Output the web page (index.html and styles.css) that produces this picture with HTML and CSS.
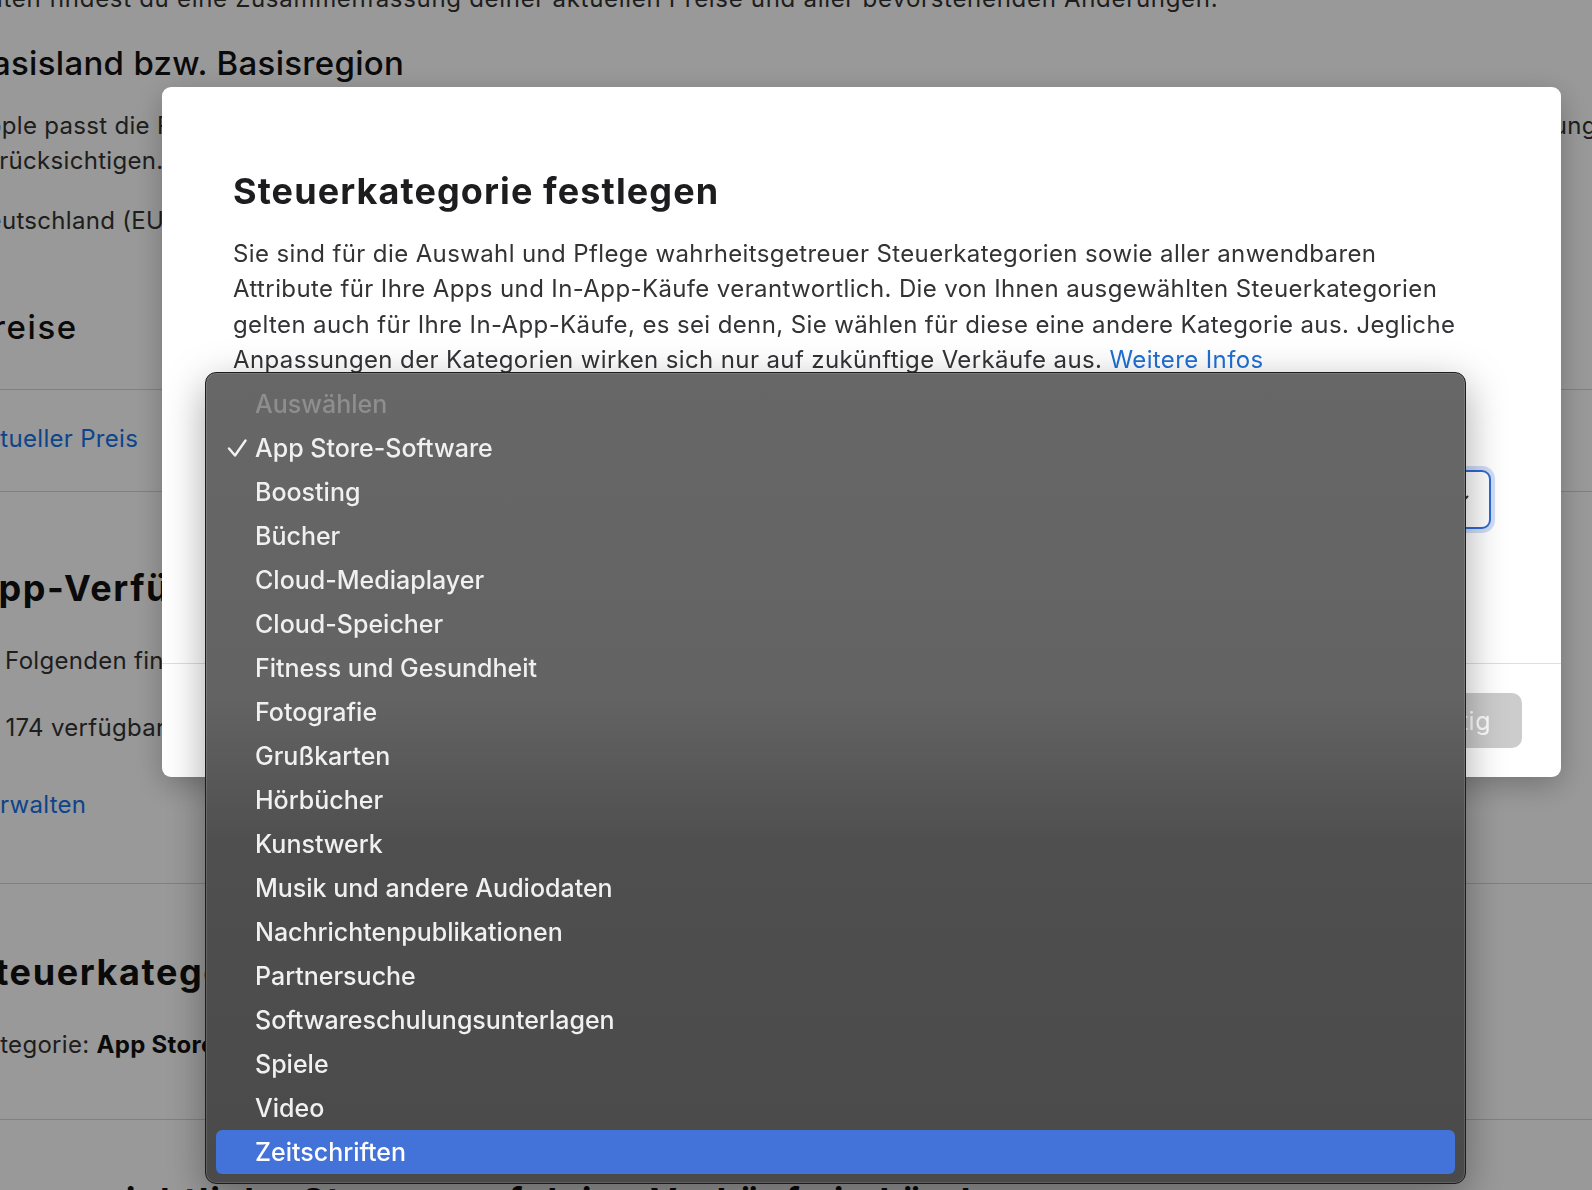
FILE: index.html
```html
<!DOCTYPE html>
<html lang="de">
  <head>
    <meta charset="UTF-8" />
    <meta name="viewport" content="width=device-width, initial-scale=1.0" />
    <title>Preise und Verfügbarkeit</title>
    <link rel="stylesheet" href="styles.css">
  </head>
  <body>
    <!-- Page behind the dialog -->
    <div class="page">
      <p class="intro">Unten findest du eine Zusammenfassung deiner aktuellen Preise und aller bevorstehenden Änderungen.</p>

      <h2 class="sub-title">Basisland bzw. Basisregion</h2>
      <p class="text region-text">Apple passt die Preise in anderen Ländern oder Regionen automatisch an, um Steuern und Wechselkursänderungen der jeweiligen Währung zu<br>berücksichtigen.</p>
      <p class="text region-value">Deutschland (EUR)</p>

      <h2 class="sub-title prices-title">Preise</h2>
      <div class="row-list">
        <div class="row"><a href="#">Aktueller Preis</a></div>
      </div>

      <h2 class="section-title availability-title">App-Verfügbarkeit</h2>
      <p class="text follow-text">Im Folgenden findest du die Länder und Regionen, in denen deine App verfügbar ist.</p>
      <p class="text count-text">In: 174 verfügbaren Ländern oder Regionen</p>
      <p class="text manage-link"><a href="#">Verwalten</a></p>

      <div class="divider"></div>

      <h2 class="section-title tax-title">Steuerkategorie</h2>
      <p class="text tax-text">Kategorie: <strong>App Store-Software</strong></p>

      <div class="divider last"></div>

      <h2 class="section-title bottom-title">Voraussichtliche Steuern auf deine Verkäufe in Ländern</h2>
    </div>

    <!-- Dialog -->
    <div class="overlay"></div>
    <div class="modal">
      <div class="modal-body">
        <h1 class="modal-title">Steuerkategorie festlegen</h1>
        <p class="modal-text">Sie sind für die Auswahl und Pflege wahrheitsgetreuer Steuerkategorien sowie aller anwendbaren Attribute für Ihre Apps und In-App-Käufe verantwortlich. Die von Ihnen ausgewählten Steuerkategorien gelten auch für Ihre In-App-Käufe, es sei denn, Sie wählen für diese eine andere Kategorie aus. Jegliche Anpassungen der Kategorien wirken sich nur auf zukünftige Verkäufe aus. <a href="#">Weitere Infos</a></p>

        <div class="field">
          <label class="field-label">Steuerkategorie</label>
          <div class="select">
            <span>App Store-Software</span>
            <svg class="chevron" width="14" height="9" viewBox="0 0 14 9">
              <path d="M1.5 1.5 L7 7 L12.5 1.5" fill="none" stroke="#333" stroke-width="2" stroke-linecap="round" stroke-linejoin="round"/>
            </svg>
          </div>
        </div>
      </div>
      <div class="modal-footer">
        <button class="btn-cancel">Abbrechen</button>
        <button class="btn-done" disabled>Fertig</button>
      </div>
    </div>

    <!-- Open select menu -->
    <ul class="menu">
      <li class="menu-item disabled">Auswählen</li>
      <li class="menu-item checked">
        <svg class="check" width="20" height="20" viewBox="0 0 20 20">
          <path d="M2 10.5 L8 17.5 L18.5 2.5" fill="none" stroke="#f2f2f2" stroke-width="2.4" stroke-linecap="round" stroke-linejoin="round"/>
        </svg>
        App Store-Software
      </li>
      <li class="menu-item">Boosting</li>
      <li class="menu-item">Bücher</li>
      <li class="menu-item">Cloud-Mediaplayer</li>
      <li class="menu-item">Cloud-Speicher</li>
      <li class="menu-item">Fitness und Gesundheit</li>
      <li class="menu-item">Fotografie</li>
      <li class="menu-item">Grußkarten</li>
      <li class="menu-item">Hörbücher</li>
      <li class="menu-item">Kunstwerk</li>
      <li class="menu-item">Musik und andere Audiodaten</li>
      <li class="menu-item">Nachrichtenpublikationen</li>
      <li class="menu-item">Partnersuche</li>
      <li class="menu-item">Softwareschulungsunterlagen</li>
      <li class="menu-item">Spiele</li>
      <li class="menu-item">Video</li>
      <li class="menu-item active">Zeitschriften</li>
    </ul>
  </body>
</html>
```

FILE: styles.css
```css
/* General Styles */
html,
body {
  margin: 0;
  padding: 0;
  height: 100%;
  overflow: hidden;
}

body {
  font-family: "Inter", "Noto Sans", sans-serif;
  background-color: #fff;
  color: #333;
}

a {
  color: #1672e6;
  text-decoration: none;
}

/* Page behind the dialog */
.page {
  width: 1700px;
  margin: -19px 0 0 -30px;
}

.page p {
  margin: 0;
}

.text,
.intro {
  font-size: 24px;
  line-height: 35px;
  letter-spacing: 0.3px;
  color: #333;
}

.intro {
  letter-spacing: 0.7px;
}

.region-text {
  white-space: nowrap;
}

.sub-title {
  font-size: 33px;
  line-height: 40px;
  font-weight: 500;
  letter-spacing: 0.3px;
  color: #111;
  margin: 27px 0 0;
}

.region-text {
  margin-top: 25px !important;
}

.region-value {
  margin-top: 25px !important;
}

.prices-title {
  margin-top: 69px;
  letter-spacing: 1.6px;
}

.row-list {
  margin-top: 42px;
  border-top: 1px solid #d6d6d6;
}

.row {
  font-size: 24px;
  line-height: 35px;
  letter-spacing: 0.3px;
  padding: 31px 0 35px;
  border-bottom: 1px solid #d6d6d6;
}

.section-title {
  font-size: 36px;
  line-height: 44px;
  font-weight: 700;
  letter-spacing: 1.6px;
  color: #111;
  margin: 0;
}

.availability-title {
  margin-top: 74px;
}

.follow-text {
  margin-top: 33px !important;
}

.count-text {
  margin-top: 32px !important;
}

.manage-link {
  margin-top: 42px !important;
}

.divider {
  height: 1px;
  background-color: #d6d6d6;
  margin-top: 61px;
}

.tax-title {
  margin-top: 66px;
}

.tax-text {
  margin-top: 33px !important;
}

.tax-text strong {
  color: #111;
}

.divider.last {
  margin-top: 57px;
}

.bottom-title {
  margin-top: 59px;
}

/* Dialog */
.overlay {
  position: fixed;
  top: 0;
  left: 0;
  width: 100%;
  height: 100%;
  background-color: rgba(0, 0, 0, 0.4);
}

.modal {
  position: fixed;
  top: 87px;
  left: 162px;
  width: 1399px;
  height: 690px;
  display: flex;
  flex-direction: column;
  background-color: #fff;
  border-radius: 9px;
  box-shadow: 0 8px 30px rgba(0, 0, 0, 0.25);
}

.modal-body {
  flex: 1;
  padding: 82px 70px 0 71px;
}

.modal-title {
  font-size: 36px;
  line-height: 44px;
  font-weight: 700;
  letter-spacing: 1.1px;
  color: #1d1d1f;
  margin: 0;
}

.modal-text {
  max-width: 1242px;
  font-size: 24px;
  line-height: 35.4px;
  letter-spacing: 0.38px;
  color: #333336;
  margin: 23px 0 0;
}

.modal-text a {
  color: #1f6fd6;
}

.field {
  margin-top: 50px;
}

.field-label {
  display: block;
  font-size: 24px;
  line-height: 35px;
  font-weight: 600;
  color: #1d1d1f;
}

.select {
  display: flex;
  justify-content: space-between;
  align-items: center;
  box-sizing: border-box;
  height: 59px;
  margin-top: 7px;
  padding: 0 20px 0 18px;
  border: 2px solid #2d6ad8;
  border-radius: 9px;
  box-shadow: 0 0 0 4px rgba(45, 106, 216, 0.22);
  font-size: 24px;
  color: #1d1d1f;
}

.modal-footer {
  display: flex;
  justify-content: flex-end;
  gap: 16px;
  padding: 29px 39px;
  border-top: 1px solid #dedede;
}

.modal-footer button {
  font-family: inherit;
  font-size: 25px;
  letter-spacing: 0.5px;
  height: 55px;
  padding: 0 31px 0 32px;
  border: none;
  border-radius: 10px;
}

.btn-cancel {
  background-color: #e8e8ed;
  color: #1d1d1f;
}

.btn-done {
  background-color: #cccccc;
  color: #fff;
}

/* Open select menu */
.menu {
  position: fixed;
  top: 372px;
  left: 205px;
  width: 1261px;
  box-sizing: border-box;
  margin: 0;
  padding: 9px 10px;
  list-style: none;
  border: 1px solid #1c1c1c;
  border-radius: 11px;
  background: linear-gradient(180deg, #676767 0%, #636363 40%, #4f4f4f 58%, #4a4a4a 100%);
  box-shadow: inset 0 0 0 1px rgba(255, 255, 255, 0.12), 0 12px 40px rgba(0, 0, 0, 0.35);
}

.menu-item {
  position: relative;
  height: 44px;
  line-height: 44px;
  padding-left: 39px;
  font-size: 25px;
  font-weight: 500;
  color: #f0f0f0;
  border-radius: 6px;
}

.menu-item.disabled {
  color: #8e8e8e;
}

.menu-item.active {
  background-color: #4372d9;
  color: #fff;
}

.check {
  position: absolute;
  left: 11px;
  top: 12px;
}
```
